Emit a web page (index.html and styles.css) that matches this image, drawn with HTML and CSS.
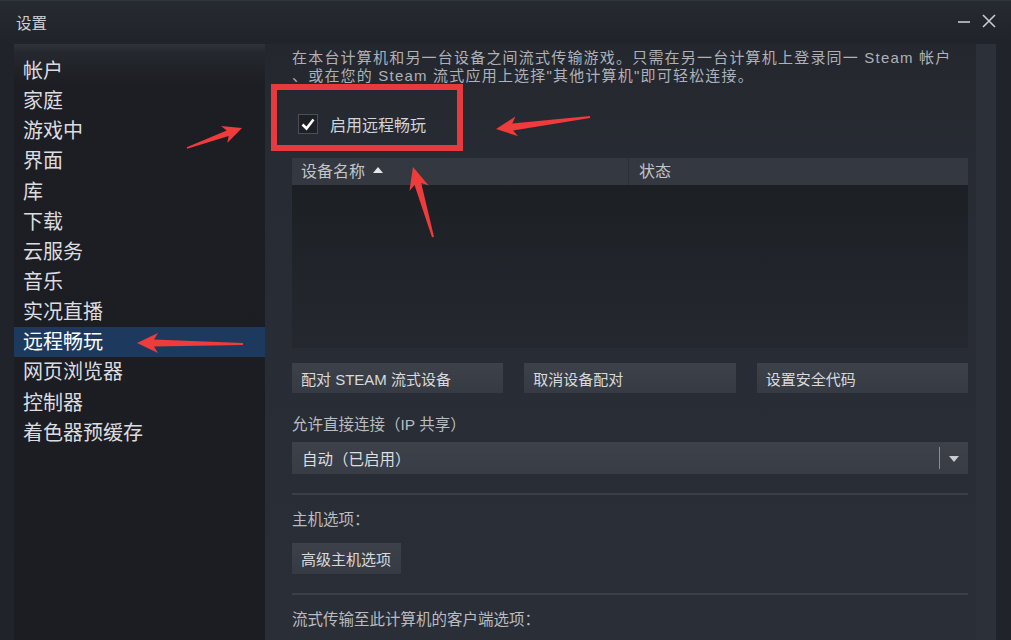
FILE: index.html
```html
<!DOCTYPE html>
<html lang="zh-CN">
<head>
  <meta charset="UTF-8">
  <meta name="viewport" content="width=device-width, initial-scale=1.0">
  <title>设置</title>
  <link rel="stylesheet" href="styles.css">
</head>
<body>
  <div class="window">
    <header class="titlebar">
      <span class="title">设置</span>
      <div class="controls">
        <svg width="14" height="14" viewBox="0 0 14 14"><line x1="1" y1="8" x2="13" y2="8" stroke="#c9cbce" stroke-width="1.6"/></svg>
        <svg width="16" height="16" viewBox="0 0 16 16"><path d="M2 2 L14 14 M14 2 L2 14" stroke="#c9cbce" stroke-width="1.6" fill="none"/></svg>
      </div>
    </header>

    <div class="main">
      <nav class="sidebar">
        <ul>
          <li>帐户</li>
          <li>家庭</li>
          <li>游戏中</li>
          <li>界面</li>
          <li>库</li>
          <li>下载</li>
          <li>云服务</li>
          <li>音乐</li>
          <li>实况直播</li>
          <li class="active">远程畅玩</li>
          <li>网页浏览器</li>
          <li>控制器</li>
          <li>着色器预缓存</li>
        </ul>
      </nav>

      <section class="content">
        <div class="page">
          <p class="intro">在本台计算机和另一台设备之间流式传输游戏。只需在另一台计算机上登录同一 Steam 帐户<br>、或在您的 Steam 流式应用上选择"其他计算机"即可轻松连接。</p>

          <label class="check">
            <span class="box">
              <svg width="16" height="16" viewBox="0 0 16 16"><path d="M2.5 8.5 L6.5 12.5 L13.5 3.5" stroke="#ffffff" stroke-width="2.6" fill="none"/></svg>
            </span>
            启用远程畅玩
          </label>

          <div class="devices">
            <div class="devices-head">
              <div class="col-name">设备名称 <span class="sort"></span></div>
              <div class="col-state">状态</div>
            </div>
            <div class="devices-body"></div>
          </div>

          <div class="btn-row">
            <button class="btn">配对 STEAM 流式设备</button>
            <button class="btn">取消设备配对</button>
            <button class="btn">设置安全代码</button>
          </div>

          <div class="field-label">允许直接连接（IP 共享）</div>
          <div class="select">
            <span class="select-value">自动（已启用）</span>
            <span class="select-sep"></span>
            <span class="caret"></span>
          </div>

          <hr class="rule">

          <div class="field-label">主机选项：</div>
          <button class="btn btn-small">高级主机选项</button>

          <hr class="rule">

          <div class="field-label">流式传输至此计算机的客户端选项：</div>
        </div>
        <div class="scrollbar"></div>
      </section>
    </div>

    <!-- annotations drawn over the screenshot -->
    <div class="mark-box"></div>
    <svg class="arrows" width="1011" height="640" viewBox="0 0 1011 640">
      <polygon points="242,128 227.2,143 228.7,136 187.3,148.8 186.7,147.3 226.7,130.4 221,126"/>
      <polygon points="496,129 518.1,136.2 513.1,130.4 590.1,118 589.9,116 512.3,123.4 515.5,116.4"/>
      <polygon points="413,167 428.7,185.4 421.2,182.9 434,236.7 432,237.3 414.5,184.9 409.4,190.9"/>
      <polygon points="137,343 158,353 154,346.5 243,345 243,343 154,339.5 158,333"/>
    </svg>
  </div>
</body>
</html>
```

FILE: styles.css
```css
body {
  margin: 0;
  padding: 0;
  background-color: #22252b;
  font-family: "Liberation Sans", "Noto Sans CJK SC", sans-serif;
  color: #c6c8cc;
  overflow: hidden;
}

.window {
  position: relative;
  width: 1011px;
  height: 640px;
  display: flex;
  flex-direction: column;
  background: linear-gradient(to bottom, #262a31 0px, #202329 44px);
}

.titlebar {
  height: 44px;
  flex: none;
  display: flex;
  align-items: center;
  justify-content: space-between;
  padding: 0 14px 0 16px;
  border-top: 1px solid #2c3442;
  box-sizing: border-box;
}

.title {
  font-size: 15.5px;
  color: #cfd1d4;
  margin-top: -2px;
}

.controls {
  display: flex;
  align-items: center;
  gap: 10px;
  margin-top: -4px;
}

.main {
  flex: 1;
  display: flex;
  min-height: 0;
}

.sidebar {
  width: 251px;
  margin-left: 14px;
  background: linear-gradient(to bottom, #30333a 0px, #25282e 8px, #1c1e23 40px, #1b1d22 100%);
}

.sidebar ul {
  list-style: none;
  margin: 0;
  padding: 12px 0 0;
}

.sidebar li {
  height: 30.15px;
  line-height: 30px;
  padding-left: 9px;
  font-size: 20px;
  color: #dcdde0;
}

.sidebar li.active {
  background-color: #1d3a5e;
  color: #ffffff;
}

.content {
  flex: 1;
  display: flex;
  background: linear-gradient(to bottom, #24272e 0px, #272b33 120px, #2a2e36 100%);
  margin-right: 15px;
}

.page {
  width: 676px;
  padding-left: 27px;
}

.scrollbar {
  width: 20px;
  margin-left: 8px;
  background-color: #2c3038;
}

.intro {
  margin: 5px 0 0;
  font-size: 15px;
  line-height: 18px;
  letter-spacing: 1.2px;
  color: #aeb2b8;
  white-space: nowrap;
}

.check {
  display: flex;
  align-items: center;
  margin-top: 29px;
  margin-left: 6px;
  height: 20px;
  font-size: 16px;
  color: #d2d4d7;
}

.box {
  width: 18px;
  height: 18px;
  border: 1px solid #4b4e56;
  background-color: #1e2025;
  display: flex;
  align-items: center;
  justify-content: center;
  margin-right: 12px;
}

.devices {
  margin-top: 24px;
}

.devices-head {
  height: 27px;
  display: flex;
  background-color: #343840;
  font-size: 16px;
  color: #c2c5ca;
  line-height: 27px;
}

.col-name {
  width: 327px;
  padding-left: 9px;
  border-right: 1px solid #2b2e35;
}

.col-state {
  padding-left: 10px;
}

.sort {
  display: inline-block;
  width: 0;
  height: 0;
  border-left: 5px solid transparent;
  border-right: 5px solid transparent;
  border-bottom: 6px solid #e4e5e7;
  margin-left: 4px;
  vertical-align: 4px;
}

.devices-body {
  height: 163px;
  background: linear-gradient(to bottom, #1c1f24, #25282e);
}

.btn-row {
  display: grid;
  grid-template-columns: repeat(3, 1fr);
  column-gap: 21px;
  margin-top: 15px;
}

.btn {
  height: 30px;
  border: none;
  background: linear-gradient(to bottom, #3d414a, #363a42);
  color: #d8dadd;
  font-family: inherit;
  font-size: 15px;
  text-align: left;
  padding: 0 9px;
}

.btn-small {
  display: block;
  height: 31px;
  width: 109px;
  margin-top: 13px;
}

.field-label {
  margin-top: 22px;
  line-height: 20px;
  font-size: 15.5px;
  color: #b9bcc1;
}

.select {
  margin-top: 7px;
  height: 32px;
  display: flex;
  align-items: center;
  background: linear-gradient(to bottom, #3d414a, #383c44);
  font-size: 15.5px;
  color: #dcdee0;
}

.select-value {
  flex: 1;
  padding-left: 10px;
}

.select-sep {
  width: 1px;
  height: 22px;
  background-color: #8a8d93;
}

.caret {
  width: 0;
  height: 0;
  border-left: 5px solid transparent;
  border-right: 5px solid transparent;
  border-top: 6px solid #c9cbcf;
  margin: 2px 9px 0 9px;
}

.rule {
  margin: 19px 0 0;
  border: none;
  height: 2px;
  background-color: #3b3f47;
}

.rule + .field-label {
  margin-top: 15px;
}

.mark-box {
  position: absolute;
  left: 271px;
  top: 84px;
  width: 180px;
  height: 55px;
  border: 6px solid #e63a3e;
}

.arrows {
  position: absolute;
  left: 0;
  top: 0;
  pointer-events: none;
}

.arrows polygon {
  fill: #ee3b3b;
}
```
